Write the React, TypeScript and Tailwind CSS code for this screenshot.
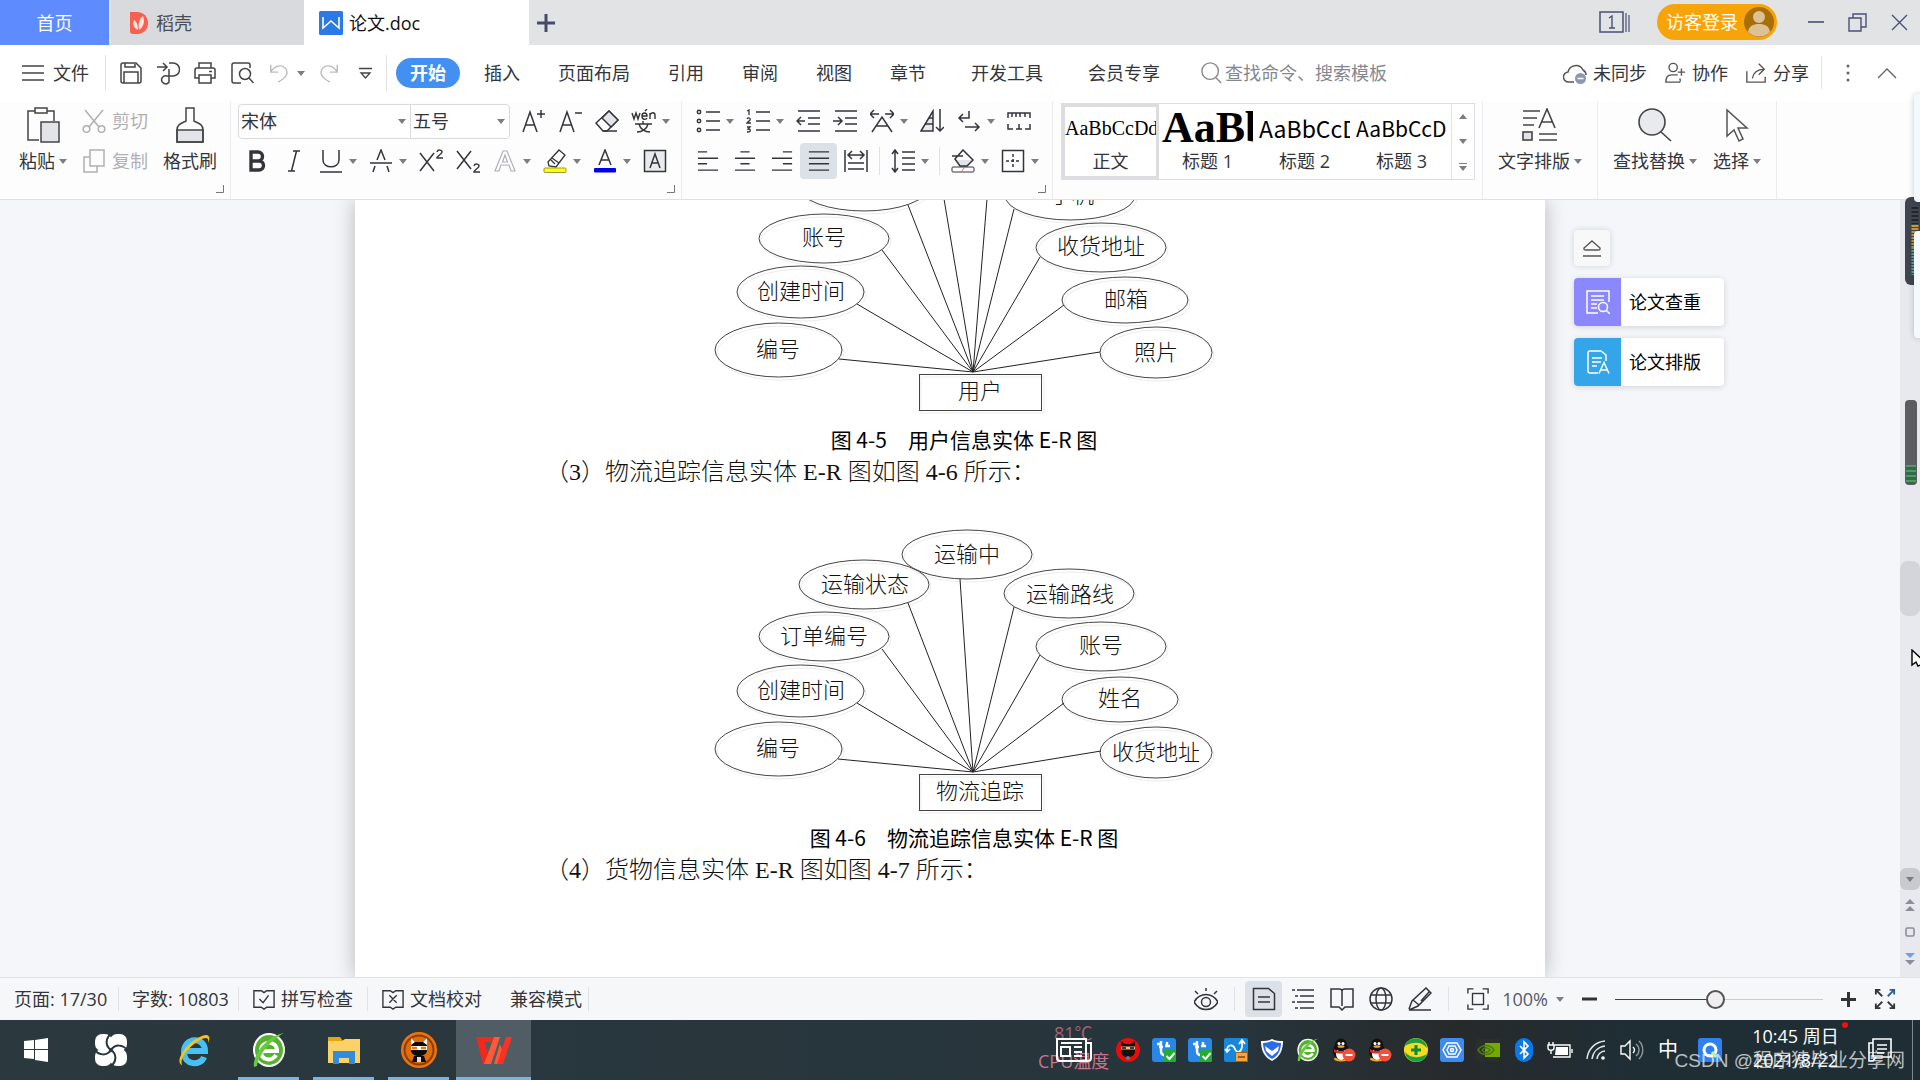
import clsx from "clsx";
import type { ReactNode } from "react";

function Icon({
  children,
  size = 24,
  className,
}: {
  children: ReactNode;
  size?: number;
  className?: string;
}) {
  return (
    <svg
      width={size}
      height={size}
      viewBox="0 0 24 24"
      fill="none"
      stroke="currentColor"
      strokeWidth={1.5}
      className={clsx("shrink-0", className)}
    >
      {children}
    </svg>
  );
}

function Caret() {
  return (
    <svg width="8" height="5" viewBox="0 0 8 5" className="shrink-0">
      <path d="M0 0h8L4 5z" fill="#7b7d84" />
    </svg>
  );
}

function Tool({
  label,
  caret,
  active,
  className,
  children,
}: {
  label: string;
  caret?: boolean;
  active?: boolean;
  className?: string;
  children: ReactNode;
}) {
  return (
    <button
      aria-label={label}
      className={clsx("flex shrink-0 items-center", className)}
    >
      <span
        className={clsx(
          "flex h-9 w-[37px] items-center justify-center rounded-sm",
          active && "bg-[#dce0e7]",
        )}
      >
        {children}
      </span>
      {caret && (
        <span className="flex w-[13px]">
          <Caret />
        </span>
      )}
    </button>
  );
}

function BigTool({
  label,
  caret = true,
  className,
  children,
}: {
  label: string;
  caret?: boolean;
  className: string;
  children: ReactNode;
}) {
  return (
    <button className={clsx("flex shrink-0 flex-col items-center", className)}>
      <span className="flex h-12 items-center">{children}</span>
      <span className="flex h-6 items-center gap-1 whitespace-nowrap">
        {label}
        {caret && <Caret />}
      </span>
    </button>
  );
}

function Launcher() {
  return (
    <div className="flex justify-end pr-1.5 pt-1">
      <svg width="8" height="8" viewBox="0 0 8 8">
        <path d="M7.5 0v7.5H0" fill="none" stroke="#777" />
      </svg>
    </div>
  );
}

function Sep({ className }: { className?: string }) {
  return <span className={clsx("w-px shrink-0 bg-[#e1e2e5]", className)} />;
}

/* ---------- title bar ---------- */

function TitleBar() {
  return (
    <header className="flex h-[45px] shrink-0 bg-[#e2e3e5]">
      <button className="w-[109px] bg-[#5e8cff] text-white">首页</button>
      <button className="ml-0.5 flex w-[193px] items-center gap-2 bg-[#d8dade] pl-[19px] text-[#4b4d55]">
        <svg width="18" height="22" viewBox="0 0 18 22">
          <path d="M0 0h7c7 0 11 5 11 11s-4 11-11 11H3a3 3 0 0 1-3-3z" fill="#f9604e" />
          <path
            d="M8 18C2 15 3 10 4 8c3 2 4 5 4 10zM9 18c-1-6 0-11 4-14 2 5 1 11-4 14z"
            fill="#ffe3de"
          />
        </svg>
        稻壳
      </button>
      <button className="flex w-[225px] items-center gap-1.5 bg-white pl-[15px] text-[#111]">
        <svg width="24" height="24" viewBox="0 0 24 24">
          <rect width="24" height="24" rx="1.5" fill="#2b79e6" />
          <path d="M4 6v11l8-7 8 7V6" fill="none" stroke="#fff" strokeWidth="1.6" />
        </svg>
        论文.doc
      </button>
      <button aria-label="新建标签" className="ml-2 text-[#474c66]">
        <svg width="18" height="18" viewBox="0 0 18 18">
          <path d="M9 0v18M0 9h18" stroke="currentColor" strokeWidth="3" />
        </svg>
      </button>

      <div className="ml-auto flex items-center pb-px text-[#4a5078]">
        <button aria-label="窗口列表">
          <svg width="31" height="22" viewBox="0 0 31 22" fill="none" stroke="currentColor">
            <rect x="1" y="1" width="23" height="20" strokeWidth="1.5" />
            <path d="M27 2v19M30 4v17" strokeWidth="1.2" />
            <path d="M10 7l3-2v12M10 17h6" strokeWidth="1.4" />
          </svg>
        </button>
        <Sep className="ml-3.5 h-7" />
        <button className="ml-3 flex h-9 w-[120px] items-center justify-between rounded-full bg-[#f7a409] pl-[9px] pr-[3px] text-white">
          访客登录
          <svg width="30" height="30" viewBox="0 0 30 30">
            <circle cx="15" cy="15" r="15" fill="#a86e08" />
            <circle cx="15" cy="10" r="6" fill="#dcc096" />
            <path d="M4 25c1-6 5-8 11-8s10 2 11 8c-6 6-16 6-22 0z" fill="#dcc096" />
          </svg>
        </button>
        <Sep className="ml-3 h-7" />
        <button aria-label="最小化" className="ml-[18px]">
          <svg width="16" height="20" viewBox="0 0 16 20">
            <path d="M0 10h16" stroke="currentColor" strokeWidth="1.6" />
          </svg>
        </button>
        <button aria-label="还原" className="ml-6">
          <svg width="19" height="19" viewBox="0 0 19 19" fill="none" stroke="currentColor" strokeWidth="1.4">
            <path d="M1 5h12v13H1zM5 5V1h13v13h-5" />
          </svg>
        </button>
        <button aria-label="关闭" className="ml-6 mr-3">
          <svg width="17" height="17" viewBox="0 0 17 17">
            <path d="M1 1l15 15M16 1L1 16" stroke="currentColor" strokeWidth="1.4" />
          </svg>
        </button>
      </div>
    </header>
  );
}

/* ---------- menu row ---------- */

const tabs = ["开始", "插入", "页面布局", "引用", "审阅", "视图", "章节", "开发工具", "会员专享"];

function MenuBar() {
  return (
    <nav className="flex h-14 shrink-0 items-center overflow-hidden whitespace-nowrap bg-white">
      <button className="flex items-center gap-[9px] pl-[22px]">
        <svg width="22" height="16" viewBox="0 0 22 16">
          <path d="M0 1h22M0 8h22M0 15h22" stroke="#444" strokeWidth="1.5" />
        </svg>
        文件
      </button>
      <Sep className="ml-4 mr-1.5 h-9" />
      <div className="flex text-[#444]">
        <Tool label="保存">
          <Icon>
            <path d="M4 2h13l5 5v13a2 2 0 0 1-2 2H4a2 2 0 0 1-2-2V4a2 2 0 0 1 2-2z" />
            <path d="M5 22V11h14v11M6 2v4h10V3" />
          </Icon>
        </Tool>
        <Tool label="输出为PDF">
          <Icon>
            <path d="M1 6h9M7 2l4 4-4 4M13 2h4a6 6 0 0 1 0 13h-6a4 4 0 1 0 2 6V8" />
          </Icon>
        </Tool>
        <Tool label="打印">
          <Icon>
            <path d="M6 7V2h12v5M6 17H2V9a2 2 0 0 1 2-2h16a2 2 0 0 1 2 2v8h-4" />
            <path d="M6 14h12v8H6zM16 10.500h3" />
          </Icon>
        </Tool>
        <Tool label="打印预览">
          <Icon>
            <path d="M11 22H4a2 2 0 0 1-2-2V4a2 2 0 0 1 2-2h14a2 2 0 0 1 2 2v3" />
            <circle cx="15" cy="13" r="5.500" />
            <path d="M19 17l4.500 5" />
          </Icon>
        </Tool>
        <Tool label="撤销" caret className="text-[#b9babd]">
          <Icon size={22}>
            <path d="M3 3v8h8M3 11c4-7 12-9 16-4s1 10-8 15" />
          </Icon>
        </Tool>
        <Tool label="恢复" className="text-[#b9babd]">
          <Icon size={22}>
            <path d="M21 3v8h-8M21 11C17 4 9 2 5 7s-1 10 8 15" />
          </Icon>
        </Tool>
        <Tool label="自定义快速访问工具栏">
          <svg width="13" height="13" viewBox="0 0 13 13" fill="none" stroke="currentColor" strokeWidth="1.3">
            <path d="M0 1.500h13M2 6h9l-4.500 5z" />
          </svg>
        </Tool>
      </div>
      <Sep className="ml-0.5 mr-1 h-9" />
      {tabs.map((tab, index) => (
        <button
          key={tab}
          className={clsx("shrink-0 px-[19px]", index > 6 && "ml-[7px]")}
        >
          {index === 0 ? (
            <span className="-mx-3.5 flex h-[30px] items-center rounded-full bg-[#4190f2] px-3.5 font-bold text-white">
              {tab}
            </span>
          ) : (
            tab
          )}
        </button>
      ))}
      <label className="ml-[22px] flex items-center gap-0.5 text-[#85878f]">
        <Icon size={22}>
          <circle cx="10" cy="10" r="9" />
          <path d="M16 17l6 6" />
        </Icon>
        <input
          placeholder="查找命令、搜索模板"
          aria-label="查找命令、搜索模板"
          className="w-48 bg-transparent outline-none placeholder:text-[#85878f]"
        />
      </label>

      <div className="ml-auto flex items-center gap-[17px]">
        <button className="flex items-center gap-1.5">
          <Icon className="text-[#555]">
            <path d="M11 21H6a5 5 0 0 1-1-10 8 8 0 0 1 15-2c2 1 3 3 3 5" />
            <circle cx="17.500" cy="17.500" r="5.500" fill="#8d97b5" stroke="none" />
            <path d="M14.500 17.500h6" stroke="#fff" />
          </Icon>
          未同步
        </button>
        <button className="flex items-center gap-1.5">
          <Icon size={22} className="text-[#555]">
            <circle cx="10" cy="6" r="4.500" />
            <path d="M15 14H8c-4 0-6 3-6 8h15c1-1 1-3 0-4M15 11h8M19 7v8" />
          </Icon>
          协作
        </button>
        <button className="flex items-center gap-1.5">
          <Icon size={22} className="text-[#555]">
            <path d="M2 10v12h20v-6M15 2l6 6-6 6M21 8c-8 0-12 3-13 10" />
          </Icon>
          分享
        </button>
      </div>
      <Sep className="ml-3 h-8" />
      <button aria-label="更多" className="ml-6">
        <svg width="4" height="18" viewBox="0 0 4 18" fill="#666">
          <circle cx="2" cy="2" r="1.500" />
          <circle cx="2" cy="9" r="1.500" />
          <circle cx="2" cy="16" r="1.500" />
        </svg>
      </button>
      <button aria-label="折叠功能区" className="ml-[27px] mr-[23px]">
        <svg width="20" height="12" viewBox="0 0 20 12">
          <path d="M1 11l9-9 9 9" fill="none" stroke="#666" strokeWidth="1.4" />
        </svg>
      </button>
    </nav>
  );
}

/* ---------- ribbon ---------- */

const styleItems = [
  { name: "正文", sample: "AaBbCcDd", look: "font-['Liberation_Serif'] text-xl" },
  { name: "标题 1", sample: "AaBb", look: "font-['Liberation_Serif'] text-[44px] font-bold" },
  { name: "标题 2", sample: "AaBbCcDd", look: "font-['Noto_Sans_CJK_SC'] text-[23px]" },
  { name: "标题 3", sample: "AaBbCcDd", look: "font-['Noto_Sans_CJK_SC'] text-[21px]" },
];

function Ribbon() {
  return (
    <section className="flex h-[99px] shrink-0 overflow-hidden border-b border-[#dfe0e3] bg-[#fdfdfe]">
      <div className="flex w-[231px] shrink-0 flex-col border-r border-[#ececef] pl-[9px]">
        <div className="flex h-20">
          <BigTool label="粘贴" className="w-[68px]">
            <svg width="34" height="36" viewBox="0 0 34 36" fill="none" stroke="#444" strokeWidth="1.5">
              <path d="M13 33H2V4h26v10" />
              <rect x="9" y="1" width="12" height="5" fill="#fff" />
              <rect x="15" y="15" width="18" height="20" fill="#e3e4ea" />
            </svg>
          </BigTool>
          <div className="flex w-[79px] flex-col text-[#b0b0b3]">
            <button className="flex h-10 items-center gap-1.5 pl-[5px]">
              <Icon>
                <path d="M3 1l14 17M21 1L7 18" />
                <circle cx="4.500" cy="20" r="3.300" />
                <circle cx="19.500" cy="20" r="3.300" />
              </Icon>
              剪切
            </button>
            <button className="flex h-10 items-center gap-1.5 pl-[5px]">
              <Icon>
                <path d="M8 1h14v16H8zM8 8H2v15h13v-6" />
              </Icon>
              复制
            </button>
          </div>
          <BigTool label="格式刷" caret={false} className="w-[68px]">
            <svg width="30" height="36" viewBox="0 0 30 36" stroke="#444" strokeWidth="1.5" fill="none">
              <path d="M2 23h26v12H2z" fill="#e3e4ea" />
              <path d="M11 1h8v13c4 2 9 3 9 9v12H2V23c0-6 5-7 9-9z" />
            </svg>
          </BigTool>
        </div>
        <Launcher />
      </div>

      <div className="flex w-[451px] shrink-0 flex-col border-r border-[#ececef] pl-[7px]">
        <div className="flex h-10 items-center">
          <div className="mr-1 flex h-[35px] w-[272px] rounded-sm border border-[#d9dadd] bg-white">
            <div className="flex w-[172px] items-center border-r border-[#d9dadd] pr-1">
              <select aria-label="字体" className="w-full appearance-none pl-0.5">
                <option>宋体</option>
              </select>
              <Caret />
            </div>
            <div className="flex flex-1 items-center pr-1">
              <select aria-label="字号" className="w-full appearance-none pl-0.5">
                <option>五号</option>
              </select>
              <Caret />
            </div>
          </div>
          <Tool label="增大字号">
            <Icon>
              <path d="M2 23L9 3l7 20M4.500 16h9M16 5h8M20 1v8" />
            </Icon>
          </Tool>
          <Tool label="减小字号">
            <Icon>
              <path d="M2 23L9 3l7 20M4.500 16h9M17 4h7" />
            </Icon>
          </Tool>
          <Tool label="清除格式">
            <Icon>
              <path d="M1 14L14 2l9 9-11 11H8z" />
              <path d="M7 9l9 9 7-7-9-9z" fill="#e3e4ea" />
              <path d="M8 22h14" />
            </Icon>
          </Tool>
          <Tool label="拼音指南" caret>
            <svg width="25" height="24" viewBox="0 0 25 24" fill="none" stroke="#333" strokeWidth="1.4">
              <path d="M1 4l2 6 2-6 2 6 2-6M11 7h5c0-4-5-4-5 0s4 4 5 2M14 2l2-2M19 10V4M19 6c1-3 5-3 5 0v4" />
              <path d="M4 15h17M12 12v3M17 15c-1 5-6 8-11 8M8 15c1 5 6 8 11 8" />
            </svg>
          </Tool>
        </div>
        <div className="flex h-10 items-center">
          <Tool label="加粗">
            <Icon>
              <path d="M6 3h7a4 4 0 0 1 0 9H6zM6 12h8a4.500 4.500 0 0 1 0 9H6z" strokeWidth="3.400" />
            </Icon>
          </Tool>
          <Tool label="倾斜">
            <Icon>
              <path d="M11 2h7M6 22h7M14.500 2l-5 20" />
            </Icon>
          </Tool>
          <Tool label="下划线" caret>
            <Icon>
              <path d="M4 1v10c0 9 16 9 16 0V1M1 23h22" />
            </Icon>
          </Tool>
          <Tool label="删除线" caret>
            <Icon>
              <path d="M8 11l4-10 4 10M1 14h22M6 17l-2 6M18 17l2 6" />
            </Icon>
          </Tool>
          <Tool label="上标">
            <Icon>
              <path d="M1 4l14 18M15 4L1 22M18 3c1-3 5-2 5 0s-5 4-5 6h6" />
            </Icon>
          </Tool>
          <Tool label="下标">
            <Icon>
              <path d="M1 2l14 18M15 2L1 20M18 17c1-3 5-2 5 0s-5 4-5 6h6" />
            </Icon>
          </Tool>
          <Tool label="文字效果" caret className="text-[#aeb0b4]">
            <Icon>
              <path d="M2 22L10 2h4l8 20h-4l-2-6H8l-2 6zM9.500 13h5L12 6z" strokeWidth="1.200" />
            </Icon>
          </Tool>
          <Tool label="突出显示" caret>
            <Icon>
              <path d="M16 1l6 5-9 12-7-1-1-4zM9 9l7 5M8 11l4 4" strokeWidth="1.300" />
              <rect x="1" y="19" width="22" height="4.500" rx="1" fill="#ffff00" stroke="#9a9a40" strokeWidth="1" />
            </Icon>
          </Tool>
          <Tool label="字体颜色" caret>
            <Icon>
              <path d="M6 16l6-15 6 15M8 11h8" />
              <rect x="1" y="19" width="22" height="4.500" rx="1" fill="#0000f0" stroke="none" />
            </Icon>
          </Tool>
          <Tool label="字符底纹">
            <Icon>
              <rect x="1.500" y="1.500" width="21" height="21" fill="#e9eaee" />
              <path d="M7 19l5-14 5 14M8.500 14h7" />
            </Icon>
          </Tool>
        </div>
        <Launcher />
      </div>

      <div className="flex w-[371px] shrink-0 flex-col border-r border-[#ececef] pl-[7px]">
        <div className="flex h-10 items-center">
          <Tool label="项目符号" caret>
            <Icon>
              <circle cx="3" cy="3" r="1.700" />
              <circle cx="3" cy="12" r="1.700" />
              <circle cx="3" cy="21" r="1.700" />
              <path d="M10 3h14M10 12h14M10 21h14" />
            </Icon>
          </Tool>
          <Tool label="编号" caret>
            <Icon>
              <path d="M1 2l2-1v5M1 10c1-2 4-1 3 1l-3 3h4M1 18h3l-2 2c3 0 3 3 0 3H1" strokeWidth="1.300" />
              <path d="M10 3h14M10 12h14M10 21h14" />
            </Icon>
          </Tool>
          <Tool label="减少缩进量">
            <Icon>
              <path d="M2 2h22M12 9h12M12 15h12M2 22h22M1 12h8M5 8l-4 4 4 4" />
            </Icon>
          </Tool>
          <Tool label="增加缩进量">
            <Icon>
              <path d="M2 2h22M12 9h12M12 15h12M2 22h22M0 12h8M5 8l4 4-4 4" />
            </Icon>
          </Tool>
          <Tool label="中文版式" caret>
            <Icon>
              <path d="M1 5h8M4 1L0 5l4 4M15 5h8M20 1l4 4-4 4M2 23l10-15 10 15M6 17h12" />
            </Icon>
          </Tool>
          <Tool label="排序">
            <Icon>
              <path d="M1 22L13 2v20z" fill="#e9eaee" />
              <path d="M9 9h4M5 15h8M20 0v22M16 18l4 4 4-4" />
            </Icon>
          </Tool>
          <Tool label="显示编辑标记" caret>
            <Icon>
              <path d="M12 2v7H2M6 5L2 9l4 4M8 18h14M18 14l4 4-4 4" />
            </Icon>
          </Tool>
          <Tool label="制表位">
            <Icon>
              <path d="M1 9V4h22v5M5 4v4M9 4v4M13 4v4M18 4v4M1 15v5h5M23 15v5h-5M12 15v5M9 20h6" />
            </Icon>
          </Tool>
        </div>
        <div className="flex h-10 items-center">
          <Tool label="左对齐">
            <Icon size={22}>
              <path d="M1 2h10M1 9h22M1 15h10M1 22h22" />
            </Icon>
          </Tool>
          <Tool label="居中对齐">
            <Icon size={22}>
              <path d="M7 2h10M1 9h22M7 15h10M1 22h22" />
            </Icon>
          </Tool>
          <Tool label="右对齐">
            <Icon size={22}>
              <path d="M13 2h10M1 9h22M13 15h10M1 22h22" />
            </Icon>
          </Tool>
          <Tool label="两端对齐" active>
            <Icon size={22}>
              <path d="M1 2h22M1 9h22M1 15h22M1 22h22" />
            </Icon>
          </Tool>
          <Tool label="分散对齐">
            <Icon>
              <path d="M1 1v22M23 1v22M4 14h16M4 20h16M4 6h16M8 2L4 6l4 4M16 2l4 4-4 4" />
            </Icon>
          </Tool>
          <span className="flex w-2.5 justify-center">
            <Sep className="h-7" />
          </span>
          <Tool label="行距" caret>
            <Icon>
              <path d="M4 1v22M1 5l3-4 3 4M1 19l3 4 3-4M11 3h13M11 9h13M11 15h13M11 21h13" />
            </Icon>
          </Tool>
          <span className="flex w-2.5 justify-center">
            <Sep className="h-7" />
          </span>
          <Tool label="底纹颜色" caret>
            <Icon>
              <path d="M5 11h16l-6 6H9z" fill="#e3e4ea" stroke="none" />
              <path d="M4 10l8-9 10 10-6 6H9zM1 7h11" />
              <rect x="1" y="18" width="22" height="5" rx="1" strokeWidth="1" />
              <path d="M10 23l4-5" stroke="#e06a7a" strokeWidth="1" />
            </Icon>
          </Tool>
          <Tool label="边框" caret>
            <Icon>
              <rect x="1.500" y="1.500" width="21" height="21" />
              <path d="M12 5v14M5 12h14" strokeDasharray="3 2" />
            </Icon>
          </Tool>
        </div>
        <Launcher />
      </div>

      <div className="w-[430px] shrink-0 border-r border-[#ececef] pl-2 pt-0.5">
        <div className="flex h-[77px] w-[414px] border border-[#dddee1] bg-white">
          {styleItems.map((item, index) => (
            <button
              key={item.name}
              className={clsx(
                "flex w-[97px] shrink-0 flex-col items-center border-[3px]",
                index === 0 ? "border-[#dcdde0]" : "border-transparent",
              )}
            >
              <span
                className={clsx(
                  "flex h-[42px] w-full items-center overflow-hidden text-black",
                  item.look,
                )}
              >
                {item.sample}
              </span>
              <span className="flex h-6 items-center">{item.name}</span>
            </button>
          ))}
          <div className="ml-auto flex w-[23px] flex-col items-center border-l border-[#e6e7ea]">
            <button aria-label="上一行" className="flex flex-1 rotate-180 items-center">
              <Caret />
            </button>
            <button aria-label="下一行" className="flex flex-1 items-center">
              <Caret />
            </button>
            <button aria-label="更多样式" className="flex flex-1 flex-col items-center justify-center gap-0.5">
              <span className="h-px w-2 bg-[#7b7d84]" />
              <Caret />
            </button>
          </div>
        </div>
      </div>

      <div className="flex w-[115px] shrink-0 justify-center border-r border-[#ececef]">
        <BigTool label="文字排版" className="w-[110px]">
          <svg width="36" height="34" viewBox="0 0 36 34" fill="none" stroke="#444" strokeWidth="1.6">
            <path d="M1 3h17M1 10h14M1 17h11M17 20L25 1l8 19M20 14h10M17 26h18M17 32h18" />
            <rect x="1" y="24" width="9" height="8" fill="#e3e4ea" />
          </svg>
        </BigTool>
      </div>
      <div className="flex w-[179px] shrink-0 border-r border-[#ececef]">
        <BigTool label="查找替换" className="w-[114px]">
          <svg width="34" height="34" viewBox="0 0 34 34" fill="none" stroke="#444" strokeWidth="1.6">
            <circle cx="14" cy="14" r="13" fill="#e9eaee" />
            <path d="M23 24l10 9" />
          </svg>
        </BigTool>
        <BigTool label="选择" className="w-[50px]">
          <svg width="24" height="34" viewBox="0 0 24 34" fill="none" stroke="#555" strokeWidth="1.5">
            <path d="M2 2v26l7-6 5 11 4-2-5-11h9z" />
          </svg>
        </BigTool>
      </div>
    </section>
  );
}

/* ---------- document ---------- */

type Node = { x: number; y: number; w: number; h: number; text?: string; tx?: number; ty?: number };
type Point = [number, number];

const userNodes: Node[] = [
  { x: 799, y: 162, w: 130, h: 49 },
  { x: 1005, y: 171, w: 130, h: 49, text: "手机", tx: 1071, ty: 195 },
  { x: 759, y: 214, w: 130, h: 49, text: "账号", tx: 823, ty: 237 },
  { x: 737, y: 266, w: 127, h: 52, text: "创建时间", tx: 800, ty: 291 },
  { x: 715, y: 323, w: 127, h: 54, text: "编号", tx: 777, ty: 349 },
  { x: 1036, y: 223, w: 130, h: 49, text: "收货地址", tx: 1100, ty: 246 },
  { x: 1062, y: 277, w: 126, h: 46, text: "邮箱", tx: 1125, ty: 299 },
  { x: 1100, y: 327, w: 112, h: 51, text: "照片", tx: 1155, ty: 352 },
];

const userLines: Point[] = [
  [839, 359], [857, 304], [882, 250], [908, 205], [944, 199],
  [987, 199], [1014, 209], [1040, 257], [1064, 305], [1100, 352],
];

const trackNodes: Node[] = [
  { x: 902, y: 530, w: 130, h: 49, text: "运输中", tx: 966, ty: 554 },
  { x: 799, y: 560, w: 130, h: 49, text: "运输状态", tx: 864, ty: 584 },
  { x: 1004, y: 569, w: 130, h: 49, text: "运输路线", tx: 1069, ty: 594 },
  { x: 759, y: 612, w: 130, h: 49, text: "订单编号", tx: 823, ty: 636 },
  { x: 1036, y: 622, w: 130, h: 49, text: "账号", tx: 1100, ty: 645 },
  { x: 737, y: 665, w: 127, h: 52, text: "创建时间", tx: 800, ty: 690 },
  { x: 1062, y: 677, w: 116, h: 45, text: "姓名", tx: 1119, ty: 698 },
  { x: 715, y: 722, w: 127, h: 54, text: "编号", tx: 777, ty: 748 },
  { x: 1100, y: 727, w: 112, h: 51, text: "收货地址", tx: 1155, ty: 752 },
];

const trackLines: Point[] = [
  [838, 759], [857, 703], [882, 649], [908, 603], [960, 579],
  [1014, 607], [1040, 655], [1064, 703], [1101, 751],
];

function Diagram({
  nodes,
  lines,
  entity,
  top,
  height,
  boxTop,
}: {
  nodes: Node[];
  lines: Point[];
  entity: string;
  top: number;
  height: number;
  boxTop: number;
}) {
  return (
    <svg
      viewBox={`545 ${top} 838 ${height}`}
      className="block w-full font-['Noto_Sans_CJK_SC',serif] text-[22px] font-light"
    >
      <g fill="none" stroke="#ececec">
        {nodes.map((n) => (
          <ellipse key={`${n.x}-${n.y}`} cx={n.x + n.w / 2 + 2} cy={n.y + n.h / 2 + 3} rx={n.w / 2} ry={n.h / 2} />
        ))}
        <rect x="921" y={boxTop + 3} width="123" height="36" />
      </g>
      <g fill="none" stroke="#444">
        {nodes.map((n) => (
          <ellipse key={`${n.x}-${n.y}`} cx={n.x + n.w / 2} cy={n.y + n.h / 2} rx={n.w / 2} ry={n.h / 2} />
        ))}
        {lines.map(([x, y]) => (
          <path key={x} d={`M${x} ${y}L973 ${boxTop - 2}`} stroke="#222" />
        ))}
        <rect x="919.5" y={boxTop + 0.5} width="122" height="36" />
      </g>
      <g fill="#111" textAnchor="middle">
        {nodes.map((n) => (
          <text key={`${n.x}-${n.y}`} x={(n.tx ?? 0) + 1} y={(n.ty ?? 0) + 8}>
            {n.text}
          </text>
        ))}
        <text x="980" y={boxTop + 25}>
          {entity}
        </text>
      </g>
    </svg>
  );
}

function Caption({ children }: { children: ReactNode }) {
  return (
    <p className="h-7 whitespace-pre text-center font-['Noto_Sans_CJK_SC',sans-serif] text-[21px] leading-[26px] text-black">
      {children}
    </p>
  );
}

// latin runs keep the regular serif, the chinese ones are set light
function Line({ text }: { text: string }) {
  return (
    <p className="h-[30px] font-['Noto_Sans_CJK_SC',serif] text-2xl font-light leading-8 text-[#111]">
      {text.split(/([A-Z0-9- ]+)/).map((part, index) =>
        index % 2 ? (
          <span key={index} className="font-['Liberation_Serif',serif] font-normal">
            {part}
          </span>
        ) : (
          part
        ),
      )}
    </p>
  );
}

function SideTools() {
  return (
    <aside className="flex flex-col items-start gap-3 pl-[29px] pt-[30px] text-black">
      <button
        aria-label="收起"
        className="flex size-9 items-center justify-center rounded-sm bg-[#f8f8f8] shadow-[0_0_6px_rgba(0,0,0,0.15)]"
      >
        <svg width="18" height="17" viewBox="0 0 18 17" fill="none" stroke="#555" strokeWidth="1.4">
          <path d="M9 1l8 7c0 2 0 2-2 2H3c-2 0-2 0-2-2zM0 16h18" />
        </svg>
      </button>
      <button className="flex h-12 w-[150px] items-center overflow-hidden rounded bg-white shadow-[0_1px_6px_rgba(0,0,0,0.15)]">
        <span className="mr-2 flex h-full w-[47px] items-center justify-center bg-[#8b87ff] text-white">
          <Icon>
            <path d="M12 23H1V1h22v11M5 6h13M5 10h13M5 14h6M5 18h6" />
            <circle cx="17" cy="17" r="4.500" />
            <path d="M20 20l4 4" />
          </Icon>
        </span>
        论文查重
      </button>
      <button className="flex h-12 w-[150px] items-center overflow-hidden rounded bg-white shadow-[0_1px_6px_rgba(0,0,0,0.15)]">
        <span className="mr-2 flex h-full w-[47px] items-center justify-center bg-[#35a5ea] text-white">
          <Icon>
            <path d="M12 23H4a2 2 0 0 1-2-2V3a2 2 0 0 1 2-2h11l5 4v6M6 8h10M6 12h9M6 16h5" />
            <path d="M13 23.500l5-11 5 11M15 20h6" />
          </Icon>
        </span>
        论文排版
      </button>
    </aside>
  );
}

function ScrollBar() {
  return (
    <div className="flex flex-col items-center bg-[#e8e9ee] pb-3 text-[#8c8f99]">
      <div className="mt-[361px] h-[55px] w-full rounded-lg bg-[#d3d5da]" />
      <button
        aria-label="向下滚动"
        className="mt-auto flex h-[22px] w-full items-center justify-center rounded-md bg-[#c8cacf]"
      >
        <Caret />
      </button>
      <button aria-label="上一页" className="mt-[9px]">
        <svg width="10" height="12" viewBox="0 0 10 12" fill="currentColor">
          <path d="M0 5l5-5 5 5zM0 12l5-5 5 5z" />
        </svg>
      </button>
      <button aria-label="选择浏览对象" className="mt-4">
        <svg width="10" height="10" viewBox="0 0 10 10" fill="none" stroke="currentColor" strokeWidth="1.6">
          <rect x="1" y="1" width="8" height="8" rx="1.5" />
        </svg>
      </button>
      <button aria-label="下一页" className="mt-4">
        <svg width="10" height="12" viewBox="0 0 10 12">
          <path d="M0 0h10L5 5z" fill="#6f9fe8" />
          <path d="M0 7h10l-5 5z" fill="#8c8f99" />
        </svg>
      </button>
    </div>
  );
}

function Workspace() {
  return (
    <main className="grid min-h-0 flex-1 grid-cols-[1fr_1190px_1fr_20px] overflow-hidden bg-[#f5f6f9]">
      <div />
      <article className="bg-white pl-[190px] pr-[162px] shadow-[0_0_20px_rgba(0,0,0,0.26)]">
        <Diagram nodes={userNodes} lines={userLines} entity="用户" top={200} height={226} boxTop={374} />
        <Caption>图 4-5　用户信息实体 E-R 图</Caption>
        <Line text="（3）物流追踪信息实体 E-R 图如图 4-6 所示：" />
        <Diagram nodes={trackNodes} lines={trackLines} entity="物流追踪" top={484} height={340} boxTop={774} />
        <Caption>图 4-6　物流追踪信息实体 E-R 图</Caption>
        <Line text="（4）货物信息实体 E-R 图如图 4-7 所示：" />
      </article>
      <SideTools />
      <ScrollBar />
    </main>
  );
}

/* ---------- status bar ---------- */

function StatusBar() {
  return (
    <footer className="flex h-[43px] shrink-0 items-center whitespace-nowrap border-t border-[#dfe2e6] bg-[#f6f7f9] pl-3.5">
      <span className="w-[104px]">页面: 17/30</span>
      <Sep className="mr-[13px] h-6" />
      <span className="w-[106px]">字数: 10803</span>
      <Sep className="mr-3.5 h-6" />
      <button className="flex items-center gap-1.5">
        <Icon size={22}>
          <path d="M1 3h8l3 2 3-2h8v18h-8l-3 2-3-2H1zM7 12l4 4 6-8" />
        </Icon>
        拼写检查
      </button>
      <Sep className="mx-3.5 h-6" />
      <button className="flex items-center gap-1.5">
        <Icon size={22}>
          <path d="M1 3h8l3 2 3-2h8v18h-8l-3 2-3-2H1zM8 8l8 8M16 8l-8 8" />
        </Icon>
        文档校对
      </button>
      <button className="ml-7">兼容模式</button>
      <Sep className="ml-1.5 h-6" />

      <div className="ml-auto flex items-center">
        <Tool label="护眼模式">
          <Icon>
            <path d="M0 15c6-10 18-10 24 0-6 10-18 10-24 0zM12 1v3M1 4l3 3M23 4l-3 3" />
            <circle cx="12" cy="15" r="4.500" />
          </Icon>
        </Tool>
        <Sep className="ml-2.5 mr-2.5 h-6" />
        <div className="flex gap-0.5">
          <Tool label="页面视图" active>
            <Icon>
              <path d="M1.500 1.500h15l6 5v16h-21zM6 10h12M6 15h12" />
            </Icon>
          </Tool>
          <Tool label="大纲">
            <Icon>
              <path d="M1 3h3M6 3h17M4 9h3M9 9h14M1 15h3M6 15h17M4 21h3M9 21h14" />
            </Icon>
          </Tool>
          <Tool label="阅读版式">
            <Icon>
              <path d="M1 2h8c2 0 3 1 3 2 0-1 1-2 3-2h8v18h-8l-3 3-3-3H1zM12 4v15" />
            </Icon>
          </Tool>
          <Tool label="Web版式">
            <Icon>
              <circle cx="12" cy="12" r="11" />
              <ellipse cx="12" cy="12" rx="5" ry="11" />
              <path d="M2 8h20M2 16h20" />
            </Icon>
          </Tool>
          <Tool label="写作模式">
            <Icon>
              <path d="M1 22l3-8L18 1l5 5-13 13-9 4h22M5 13l6 5M13 14l8-9" />
            </Icon>
          </Tool>
        </div>
        <Sep className="ml-2.5 mr-2.5 h-6" />
        <Tool label="适合页面">
          <Icon size={22}>
            <path d="M1 6V1h6M17 1h6v5M1 18v5h6M17 23h6v-5" />
            <rect x="6" y="6" width="12" height="12" />
          </Icon>
        </Tool>
        <button className="ml-1.5 flex items-center gap-2 text-[#555a6b]">
          100%
          <Caret />
        </button>
        <button aria-label="缩小" className="ml-[18px]">
          <svg width="15" height="4" viewBox="0 0 15 4">
            <path d="M0 2h15" stroke="#333" strokeWidth="3" />
          </svg>
        </button>
        <input
          type="range"
          aria-label="显示比例"
          defaultValue={48}
          className="mx-[18px] h-5 w-[208px] appearance-none bg-[linear-gradient(to_right,#3d4045_48%,#c9ccd1_48%)] bg-[length:100%_1px] bg-center bg-no-repeat [&::-webkit-slider-thumb]:size-[19px] [&::-webkit-slider-thumb]:appearance-none [&::-webkit-slider-thumb]:rounded-full [&::-webkit-slider-thumb]:border-2 [&::-webkit-slider-thumb]:border-[#555] [&::-webkit-slider-thumb]:bg-[#efedef]"
        />
        <button aria-label="放大">
          <svg width="15" height="15" viewBox="0 0 15 15">
            <path d="M0 7.500h15M7.500 0v15" stroke="#333" strokeWidth="3" />
          </svg>
        </button>
        <button aria-label="全屏显示" className="ml-[18px] mr-6">
          <Icon size={22}>
            <path d="M2 7V2h5M2 2l7 7M2 17v5h5M2 22l7-7M22 17v5h-5M22 22l-7-7" strokeWidth="2" />
            <path d="M17 2h5v5M22 2l-7 7" stroke="#2a5f9e" strokeWidth="2" />
          </Icon>
        </button>
      </div>
    </footer>
  );
}

/* ---------- taskbar ---------- */

function TaskApp({
  label,
  running,
  active,
  className,
  children,
}: {
  label: string;
  running?: boolean;
  active?: boolean;
  className?: string;
  children: ReactNode;
}) {
  return (
    <button
      aria-label={label}
      className={clsx(
        "relative flex w-[75px] shrink-0 items-center justify-center",
        active && "bg-[#515d64]",
        className,
      )}
    >
      {children}
      {running && (
        <span
          className={clsx(
            "absolute bottom-0 h-[3px] bg-[#76b5e8]",
            active ? "inset-x-0" : "inset-x-[7px]",
          )}
        />
      )}
    </button>
  );
}

function GuardIcon() {
  return (
    <svg width="24" height="24" viewBox="0 0 24 24">
      <rect width="24" height="24" rx="3" fill="#2b87e6" />
      <path d="M5 6h4M9 3v10c0 5 5 5 6 2M13 8h5M15 4v5M7 9h4" stroke="#fff" strokeWidth="2.400" fill="none" />
      <rect x="12" y="12" width="12" height="12" rx="1.5" fill="#1fae2e" />
      <path d="M14.500 18l3 3 5-6" stroke="#fff" strokeWidth="2" fill="none" />
    </svg>
  );
}

function PenguinIcon() {
  return (
    <svg width="24" height="24" viewBox="0 0 24 24">
      <ellipse cx="9" cy="21" rx="7" ry="2.500" fill="#f5a623" />
      <ellipse cx="9" cy="13" rx="8" ry="9" fill="#111" />
      <ellipse cx="9" cy="16" rx="5" ry="6" fill="#fff" />
      <ellipse cx="9" cy="7" rx="6" ry="6.500" fill="#111" />
      <circle cx="7" cy="5.500" r="1.500" fill="#fff" />
      <circle cx="11" cy="5.500" r="1.500" fill="#fff" />
      <ellipse cx="9" cy="8.500" rx="3.500" ry="1.300" fill="#f5a623" />
      <path d="M2 11c4 3 10 3 14 0v3c-4 2-10 2-14 0z" fill="#e22" />
      <circle cx="17" cy="17" r="6.500" fill="#f2503f" />
      <path d="M13.500 17h7" stroke="#fff" strokeWidth="2" />
    </svg>
  );
}

function BrowserIcon({ size }: { size: number }) {
  return (
    <svg width={size} height={size} viewBox="0 0 34 36">
      <ellipse cx="17" cy="18" rx="16" ry="17" fill="#fff" />
      <ellipse cx="17" cy="18" rx="14" ry="15" fill="#56b330" />
      <path d="M10 19h15c0-11-16-11-16 0s12 10 15 4" fill="none" stroke="#fff" strokeWidth="4" />
      <path d="M2 35C0 24 14 4 32 1 20 7 7 22 5 34z" fill="#6cc644" />
    </svg>
  );
}

const tray: { label: string; icon: ReactNode }[] = [
  {
    label: "游戏加速",
    icon: (
      <svg width="24" height="24" viewBox="0 0 24 24">
        <circle cx="12" cy="12" r="12" fill="#e80c0c" />
        <path d="M5 3l4 3h6l4-3v10c0 4-3 6-7 6s-7-2-7-6z" fill="#111" />
        <path d="M5 10h14" stroke="#ffb27a" strokeWidth="3" />
        <path d="M6 10h4M14 10h4" stroke="#111" strokeWidth="1.5" />
        <circle cx="12" cy="20" r="2" fill="#777" />
      </svg>
    ),
  },
  { label: "安全卫士", icon: <GuardIcon /> },
  { label: "安全卫士服务", icon: <GuardIcon /> },
  {
    label: "网络流量",
    icon: (
      <svg width="24" height="24" viewBox="0 0 24 24">
        <rect width="24" height="24" rx="2" fill="#1687da" />
        <path d="M3 13c0-7 6-7 8-2s6 3 7-2V3M15 6l3-4 3 4M1 11l2 3 3-3" stroke="#fff" strokeWidth="1.700" fill="none" />
        <rect x="11.500" y="14.500" width="12" height="9" fill="#f8a43c" stroke="#a45f12" />
        <path d="M14 19h7" stroke="#7d480d" strokeWidth="1.500" />
      </svg>
    ),
  },
  {
    label: "电脑管家",
    icon: (
      <svg width="24" height="24" viewBox="0 0 24 24">
        <path d="M12 1c4 2 7 2 11 2 0 9-3 16-11 20C4 19 1 12 1 3c4 0 7 0 11-2z" fill="#fff" />
        <path d="M12 3c3 1 6 2 9 2 0 7-3 13-9 16C6 18 3 12 3 5c3 0 6-1 9-2z" fill="#2a6bea" />
        <path d="M5 8l7 5 7-5-1 5-6 5-6-5z" fill="#fff" />
      </svg>
    ),
  },
  { label: "安全浏览器", icon: <BrowserIcon size={24} /> },
  { label: "QQ", icon: <PenguinIcon /> },
  { label: "QQ", icon: <PenguinIcon /> },
  {
    label: "360安全卫士",
    icon: (
      <svg width="24" height="24" viewBox="0 0 24 24">
        <circle cx="12" cy="12" r="12" fill="#f6dc1c" />
        <path d="M1 8C4-1 16-3 22 6l1 4C18 4 10 3 1 8zM23 16c-3 9-15 11-21 2l-1-4c5 6 13 7 22 2z" fill="#1c9e46" />
        <path d="M12 7v10M7 12h10" stroke="#0b8a3a" strokeWidth="3" />
      </svg>
    ),
  },
  {
    label: "设备管理",
    icon: (
      <svg width="24" height="24" viewBox="0 0 24 24" fill="none" stroke="#fff" strokeWidth="1.5">
        <rect width="24" height="24" rx="3" fill="#3d8bf0" stroke="none" />
        <path d="M7 5h10l4 7-4 7H7l-4-7z" />
        <path d="M9 8h6l2 4-2 4H9l-2-4z" />
        <circle cx="12" cy="12" r="1.500" />
      </svg>
    ),
  },
  {
    label: "NVIDIA 设置",
    icon: (
      <svg width="24" height="24" viewBox="0 0 24 24">
        <rect y="1" width="24" height="22" fill="#2b2f2c" />
        <rect x="9" y="5" width="15" height="14" fill="#76a900" />
        <path d="M2 12c4-6 12-6 16 0-4 6-12 6-16 0zM6 12c2-3 6-3 8 0-2 3-6 3-8 0z" fill="none" stroke="#4b7a10" strokeWidth="1.500" />
      </svg>
    ),
  },
  {
    label: "蓝牙",
    icon: (
      <svg width="24" height="24" viewBox="0 0 24 24">
        <rect x="3" width="18" height="24" rx="9" fill="#0a78e6" />
        <path d="M8 8l8 8-4 4V4l4 4-8 8" stroke="#fff" strokeWidth="1.600" fill="none" />
      </svg>
    ),
  },
  {
    label: "电源",
    icon: (
      <svg width="26" height="20" viewBox="0 0 26 20" stroke="#fff" fill="none" strokeWidth="1.400">
        <path d="M7 5h16v12H6M25 9v4M1 5h6v3c0 3-6 3-6 0zM2 5V2M6 5V2M4 10v4" />
        <path d="M9 7h12v8H8z" fill="#fff" stroke="none" />
      </svg>
    ),
  },
  {
    label: "网络",
    icon: (
      <svg width="22" height="22" viewBox="0 0 22 22" stroke="#dfe5e8" fill="none" strokeWidth="1.500">
        <path d="M2 20C3 10 10 3 20 2M7 20C8 13 13 8 20 7M12 20c0-4 4-8 8-8" />
        <circle cx="18" cy="19" r="1.800" fill="#fff" stroke="none" />
      </svg>
    ),
  },
  {
    label: "音量",
    icon: (
      <svg width="24" height="22" viewBox="0 0 24 22" stroke="#fff" fill="none" strokeWidth="1.400">
        <path d="M1 7h4l5-5v18l-5-5H1zM13 8c2 2 2 4 0 6" />
        <path d="M16 5c4 3 4 9 0 12M19 2c5 5 5 13 0 18" stroke="#8d979c" />
      </svg>
    ),
  },
];

function TaskBar() {
  return (
    <footer className="relative flex h-[60px] shrink-0 overflow-hidden bg-[linear-gradient(to_right,#2b393f,#26343b_65%,#272a2b_76%,#1f2e35_85%)] text-white">
      <TaskApp label="开始菜单" className="-ml-0.5">
        <svg width="24" height="24" viewBox="0 0 24 24" fill="#fff">
          <path d="M0 3l10-1v9H0zM11 2l13-2v11H11zM0 12h10v9L0 20zM11 12h13v12l-13-2z" />
        </svg>
      </TaskApp>
      <TaskApp label="搜索">
        <svg width="34" height="34" viewBox="0 0 34 34">
          <g fill="#fff">
            <rect x="1" y="1" width="17" height="17" rx="7" />
            <rect x="16" y="1" width="17" height="17" rx="7" />
            <rect x="1" y="16" width="17" height="17" rx="7" />
            <rect x="16" y="16" width="17" height="17" rx="7" />
          </g>
          <g fill="none" stroke="#28363c" strokeWidth="2">
            <path d="M17 17C11 13 11 5 18 0" />
            <path d="M17 17C11 13 11 5 18 0" transform="rotate(90 17 17)" />
            <path d="M17 17C11 13 11 5 18 0" transform="rotate(180 17 17)" />
            <path d="M17 17C11 13 11 5 18 0" transform="rotate(270 17 17)" />
          </g>
        </svg>
      </TaskApp>
      <TaskApp label="Internet Explorer" className="ml-2">
        <svg width="34" height="34" viewBox="0 0 34 34">
          <path d="M8 18h20c0-15-21-14-21 1 0 14 17 14 20 5" fill="none" stroke="#48c0f2" strokeWidth="6" />
          <path d="M5 32C-3 29 9 9 25 3c7-3 9 1 6 7 1-5-1-6-6-4C14 11 2 25 5 32z" fill="#f5c518" />
        </svg>
      </TaskApp>
      <TaskApp label="安全浏览器" running>
        <BrowserIcon size={36} />
      </TaskApp>
      <TaskApp label="文件资源管理器" running>
        <svg width="34" height="28" viewBox="0 0 34 28">
          <path d="M1 1h12l3 4H1z" fill="#e5a50e" />
          <path d="M1 5h14l3-2h15v24H1z" fill="#fbd168" />
          <path d="M6 15h22v13h-6v-6H12v6H6z" fill="#2f8de0" />
        </svg>
      </TaskApp>
      <TaskApp label="游戏加速" running>
        <svg width="36" height="36" viewBox="0 0 36 36">
          <circle cx="18" cy="18" r="18" fill="#f0730a" />
          <circle cx="18" cy="18" r="15.500" fill="#8a3c05" />
          <circle cx="18" cy="18" r="13.500" fill="#e06c0c" />
          <path d="M10 6l4 4h8l4-4v12c0 4-4 6-8 6s-8-2-8-6z" fill="#0c0c0c" />
          <path d="M10 6l4 4-4 3zM26 6l-4 4 4 3z" fill="#fff" />
          <path d="M10 16h16" stroke="#fff" strokeWidth="4" />
          <path d="M11 16h5M20 16h5" stroke="#f0730a" strokeWidth="2.500" />
          <path d="M13 24h10l2 6H11z" fill="#0c0c0c" />
          <rect x="16" y="25" width="4" height="5" fill="#ddd" />
        </svg>
      </TaskApp>
      <TaskApp label="WPS Office" running active>
        <svg width="36" height="28" viewBox="0 0 36 28">
          <path d="M0 1h18l-2 5H9l3 13-2 9H7z" fill="#f0281e" />
          <path d="M18 1h6l-9 27H8z" fill="#ff5a36" />
          <path d="M24 8l3 9-4 11h-5z" fill="#ff5a36" />
          <path d="M30 1h6l-9 27h-6z" fill="#ff2f22" />
        </svg>
      </TaskApp>

      <div className="ml-auto flex">
        <button aria-label="资讯" className="relative flex w-[72px] items-center justify-center">
          <span className="absolute left-4 top-px text-[#a56074]">81℃</span>
          <span className="absolute left-0 top-[29px] whitespace-nowrap text-[#c8748c]">CPU温度</span>
          <svg width="36" height="24" viewBox="0 0 36 24" fill="none" stroke="#fff" strokeWidth="2" className="relative">
            <path d="M1 1h29v22H4c-2 0-3-1-3-3zM30 5h5v15c0 2-1 3-3 3h-3" />
            <path d="M5 9h9v9H5zM5 5h21M18 9h8M18 14h8M18 18h8" />
          </svg>
        </button>
        {tray.map((item, index) => (
          <button key={index} aria-label={item.label} className="flex w-9 items-center justify-center">
            {item.icon}
          </button>
        ))}
        <button className="w-9 text-xl leading-[60px]">中</button>
        <button aria-label="输入法" className="ml-1.5 flex w-9 items-center justify-center">
          <svg width="24" height="24" viewBox="0 0 24 24">
            <rect width="24" height="24" rx="3" fill="#2f80f0" />
            <circle cx="12" cy="12" r="6" fill="none" stroke="#fff" strokeWidth="3" />
            <path d="M14 14l4 5" stroke="#bdf0a0" strokeWidth="3" />
          </svg>
        </button>
        <button className="relative ml-[15px] flex w-[105px] flex-col items-center pt-1 leading-6">
          <span>10:45 周日</span>
          <span>2021/8/22</span>
          <span className="absolute right-0 top-0.5 size-1.5 rounded-full bg-[#f01010]" />
        </button>
        <button aria-label="通知" className="flex w-16 items-center justify-center">
          <svg width="24" height="24" viewBox="0 0 24 24" fill="none" stroke="#fff" strokeWidth="1.600">
            <path d="M5 1h18v18H5zM5 5H1v18h4l3-4M9 7h10M9 11h10M9 15h7" />
          </svg>
        </button>
        <button aria-label="显示桌面" className="w-2 border-l border-[#7e888c]" />
      </div>
      <span className="absolute right-[15px] top-[27px] whitespace-nowrap font-['Liberation_Sans','Noto_Sans_CJK_SC',sans-serif] text-[19px] leading-7 text-white/70">
        CSDN @程序猿毕业分享网
      </span>
    </footer>
  );
}

/* desktop widgets docked on the right edge, with the pointer */
function EdgeWidgets() {
  return (
    <div className="pointer-events-none absolute inset-0 overflow-hidden">
      <svg width="15" height="88" viewBox="0 0 15 88" className="absolute right-0 top-[197px]">
        <path d="M15 0H6a6 6 0 0 0-6 6v76a6 6 0 0 0 6 6h9z" fill="#3f444f" />
        <path d="M10 10v17" stroke="#22262e" strokeWidth="7" strokeDasharray="2 2" />
        <path d="M10 28v22" stroke="#c99a35" strokeWidth="7" strokeDasharray="2 1" />
        <path d="M10 50v28" stroke="#58a890" strokeWidth="7" strokeDasharray="2 1" />
      </svg>
      <div className="absolute -right-1 top-[94px] h-[108px] w-2.5 rounded bg-[#f3f9fc] shadow-[0_0_6px_rgba(0,0,0,0.2)]" />
      <div className="absolute -right-1 top-[231px] h-[107px] w-2.5 rounded bg-[#f3f9fc] shadow-[0_0_6px_rgba(0,0,0,0.2)]" />
      <svg width="12" height="85" viewBox="0 0 12 85" className="absolute right-[3px] top-[400px]">
        <rect width="12" height="85" rx="4" fill="#5c5d61" />
        <path d="M1 66h10v14a4 4 0 0 1-4 4H5a4 4 0 0 1-4-4z" fill="#2f6b43" />
        <path d="M1 66h10M1 71h10M1 76h10M1 81h10" stroke="#7dc08e" strokeWidth="1.200" />
      </svg>
      <svg width="9" height="18" viewBox="0 0 9 18" className="absolute right-0 top-[649px]">
        <path d="M1 1v15l4-3 2 4 8-3-14-13z" fill="#fff" stroke="#000" strokeWidth="1.400" />
      </svg>
    </div>
  );
}

export default function App() {
  return (
    <div className="relative flex h-screen flex-col overflow-hidden font-['Open_Sans','Noto_Sans_CJK_SC',sans-serif] text-[18px] leading-6 text-[#33353b]">
      <TitleBar />
      <MenuBar />
      <Ribbon />
      <Workspace />
      <StatusBar />
      <TaskBar />
      <EdgeWidgets />
    </div>
  );
}
